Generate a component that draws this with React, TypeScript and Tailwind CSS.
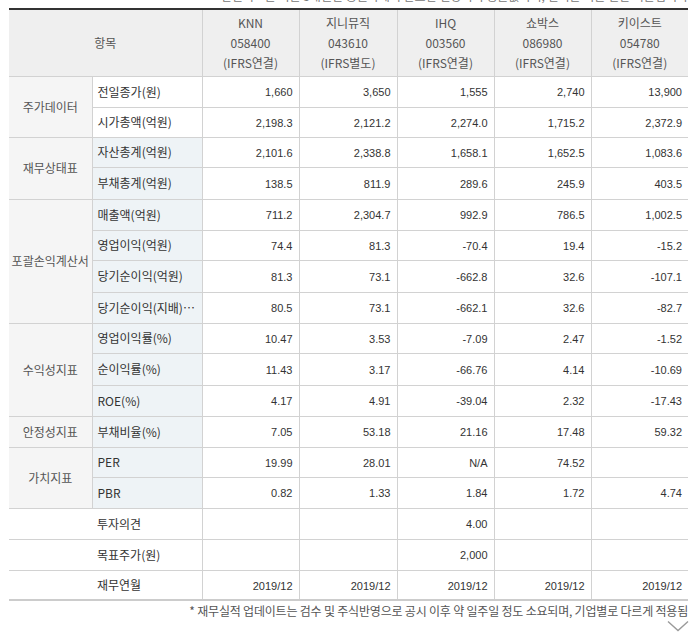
import React from "react";

const KR = "font-['Noto_Sans_CJK_KR','Noto_Sans',sans-serif]";
const NUM = "font-['Liberation_Sans','Noto_Sans_CJK_KR',sans-serif]";

const companies = [
  ["KNN", "058400", "(IFRS연결)"],
  ["지니뮤직", "043610", "(IFRS별도)"],
  ["IHQ", "003560", "(IFRS연결)"],
  ["쇼박스", "086980", "(IFRS연결)"],
  ["키이스트", "054780", "(IFRS연결)"],
];

type Row = { item: string; vals: string[] };
type Group = { label: string; white?: boolean; rows: Row[] };

const groups: Group[] = [
  {
    label: "주가데이터",
    white: true,
    rows: [
      { item: "전일종가(원)", vals: ["1,660", "3,650", "1,555", "2,740", "13,900"] },
      { item: "시가총액(억원)", vals: ["2,198.3", "2,121.2", "2,274.0", "1,715.2", "2,372.9"] },
    ],
  },
  {
    label: "재무상태표",
    rows: [
      { item: "자산총계(억원)", vals: ["2,101.6", "2,338.8", "1,658.1", "1,652.5", "1,083.6"] },
      { item: "부채총계(억원)", vals: ["138.5", "811.9", "289.6", "245.9", "403.5"] },
    ],
  },
  {
    label: "포괄손익계산서",
    rows: [
      { item: "매출액(억원)", vals: ["711.2", "2,304.7", "992.9", "786.5", "1,002.5"] },
      { item: "영업이익(억원)", vals: ["74.4", "81.3", "-70.4", "19.4", "-15.2"] },
      { item: "당기순이익(억원)", vals: ["81.3", "73.1", "-662.8", "32.6", "-107.1"] },
      { item: "당기순이익(지배)…", vals: ["80.5", "73.1", "-662.1", "32.6", "-82.7"] },
    ],
  },
  {
    label: "수익성지표",
    rows: [
      { item: "영업이익률(%)", vals: ["10.47", "3.53", "-7.09", "2.47", "-1.52"] },
      { item: "순이익률(%)", vals: ["11.43", "3.17", "-66.76", "4.14", "-10.69"] },
      { item: "ROE(%)", vals: ["4.17", "4.91", "-39.04", "2.32", "-17.43"] },
    ],
  },
  {
    label: "안정성지표",
    rows: [{ item: "부채비율(%)", vals: ["7.05", "53.18", "21.16", "17.48", "59.32"] }],
  },
  {
    label: "가치지표",
    rows: [
      { item: "PER", vals: ["19.99", "28.01", "N/A", "74.52", ""] },
      { item: "PBR", vals: ["0.82", "1.33", "1.84", "1.72", "4.74"] },
    ],
  },
];

const bottomRows: Row[] = [
  { item: "투자의견", vals: ["", "", "4.00", "", ""] },
  { item: "목표주가(원)", vals: ["", "", "2,000", "", ""] },
  { item: "재무연월", vals: ["2019/12", "2019/12", "2019/12", "2019/12", "2019/12"] },
];

const rowH = [
  "h-[31px]", "h-[30px]", "h-[30px]", "h-[32px]", "h-[31px]", "h-[30px]", "h-[32px]", "h-[31px]", "h-[30px]",
  "h-[32px]", "h-[31px]", "h-[31px]", "h-[30px]", "h-[31px]", "h-[31px]", "h-[31px]", "h-[30px]",
];

export default function App() {
  let idx = 0;
  return (
    <div className={`relative h-[641px] w-[699px] overflow-hidden bg-white ${KR}`}>
      <div className="h-[8px] overflow-hidden pl-[9px]">
        <div className="-mt-[11px] w-[679px] text-right text-[12px] leading-[14px] text-[#777]">
          * 컨센서스는 최근 3개월간 증권사에서 발표한 전망치의 평균값이며, 실적은 최근 결산 기준입니다
        </div>
      </div>
      <div className="pl-[9px]">
        <div className="h-[2px] w-[679px] bg-[#333]" />
        <table className="w-[679px] table-fixed border-collapse">
          <colgroup>
            <col className="w-[83px]" />
            <col className="w-[110px]" />
            <col className="w-[97px]" />
            <col className="w-[98px]" />
            <col className="w-[97px]" />
            <col className="w-[97px]" />
            <col className="w-[97px]" />
          </colgroup>
          <thead>
            <tr className="h-[66px] bg-[#efefef]">
              <th
                colSpan={2}
                className="border-b border-[#d2d2d2] text-center text-[12px] font-normal text-[#555]"
              >
                항목
              </th>
              {companies.map((c, i) => (
                <th
                  key={i}
                  className="border-b border-l border-[#d2d2d2] p-0 text-center text-[12px] font-normal leading-[20px] text-[#555]"
                >
                  <div>{c[0]}</div>
                  <div>{c[1]}</div>
                  <div>{c[2]}</div>
                </th>
              ))}
            </tr>
          </thead>
          <tbody>
            {groups.map((g) =>
              g.rows.map((r, ri) => {
                const h = rowH[idx++];
                return (
                  <tr key={g.label + ri} className={h}>
                    {ri === 0 && (
                      <td
                        rowSpan={g.rows.length}
                        className="border-b border-[#d2d2d2] bg-[#f5f5f5] p-0 text-center text-[12px] text-[#555]"
                      >
                        {g.label}
                      </td>
                    )}
                    <td
                      className={`border-b border-l border-[#d2d2d2] py-0 pl-[5px] pr-0 text-left text-[12px] whitespace-nowrap text-[#333] ${
                        g.white ? "bg-white" : "bg-[#eef3f6]"
                      }`}
                    >
                      {r.item}
                    </td>
                    {r.vals.map((v, vi) => (
                      <td
                        key={vi}
                        className={`border-b border-l border-[#d2d2d2] py-0 pr-[6px] pl-0 text-right text-[11px] text-[#333] ${NUM}`}
                      >
                        <span className="relative top-[1px]">{v}</span>
                      </td>
                    ))}
                  </tr>
                );
              })
            )}
            {bottomRows.map((r, ri) => {
              const h = rowH[idx++];
              const last = ri === bottomRows.length - 1;
              return (
                <tr key={r.item} className={h}>
                  <td
                    colSpan={2}
                    className={`${
                      last ? "border-b-2 border-[#cccccc]" : "border-b border-[#d2d2d2]"
                    } bg-white py-0 pl-[88px] pr-0 text-left text-[12px] whitespace-nowrap text-[#333]`}
                  >
                    {r.item}
                  </td>
                  {r.vals.map((v, vi) => (
                    <td
                      key={vi}
                      className={`${
                        last ? "border-b-2 border-l border-[#cccccc] border-l-[#d2d2d2]" : "border-b border-l border-[#d2d2d2]"
                      } py-0 pr-[6px] pl-0 text-right text-[11px] text-[#333] ${NUM}`}
                    >
                      <span className="relative top-[1px]">{v}</span>
                    </td>
                  ))}
                </tr>
              );
            })}
          </tbody>
        </table>
        <div className="mt-[2px] w-[679px] text-right text-[12px] leading-[16px] tracking-[-0.2px] text-[#555]">
          * 재무실적 업데이트는 검수 및 주식반영으로 공시 이후 약 일주일 정도 소요되며, 기업별로 다르게 적용됨
        </div>
        <div className="flex h-[20px] w-[680px] items-start justify-end pt-[1px]">
          <svg className="block h-[12px] w-[22px]" viewBox="0 0 22 12" fill="none">
            <path d="M1 1.5 L11 10.5 L21 1.5" stroke="#9a9a9a" strokeWidth="1.4" />
          </svg>
        </div>
      </div>
    </div>
  );
}
